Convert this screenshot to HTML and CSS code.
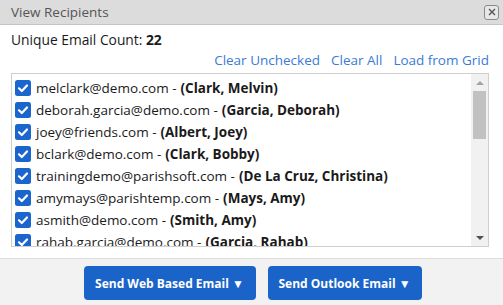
FILE: index.html
```html
<!DOCTYPE html>
<html>
<head>
<meta charset="utf-8">
<link rel="stylesheet" href="styles.css">
</head>
<body>
<div class="dialog">
  <div class="titlebar">
    <span class="title">View Recipients</span>
    <span class="close"><svg width="8" height="8" viewBox="0 0 8 8"><path d="M1 1L7 7M7 1L1 7" stroke="#555" stroke-width="1.4"/></svg></span>
  </div>
  <div class="content">
    <div class="count">Unique Email Count: <b>22</b></div>
    <div class="links">
      <a>Clear Unchecked</a><a>Clear All</a><a>Load from Grid</a>
    </div>
    <div class="listbox">
      <div class="items">
        <div class="row"><span class="cb"><svg width="16" height="16" viewBox="0 0 16 16"><rect width="16" height="16" rx="2.5" fill="#1a66cc"/><path d="M4 8.3L6.8 11L12 5.5" fill="none" stroke="#fff" stroke-width="2.2" stroke-linecap="round" stroke-linejoin="round"/></svg></span>melclark@demo.com - <b>(Clark, Melvin)</b></div>
        <div class="row"><span class="cb"><svg width="16" height="16" viewBox="0 0 16 16"><rect width="16" height="16" rx="2.5" fill="#1a66cc"/><path d="M4 8.3L6.8 11L12 5.5" fill="none" stroke="#fff" stroke-width="2.2" stroke-linecap="round" stroke-linejoin="round"/></svg></span>deborah.garcia@demo.com - <b>(Garcia, Deborah)</b></div>
        <div class="row"><span class="cb"><svg width="16" height="16" viewBox="0 0 16 16"><rect width="16" height="16" rx="2.5" fill="#1a66cc"/><path d="M4 8.3L6.8 11L12 5.5" fill="none" stroke="#fff" stroke-width="2.2" stroke-linecap="round" stroke-linejoin="round"/></svg></span>joey@friends.com - <b>(Albert, Joey)</b></div>
        <div class="row"><span class="cb"><svg width="16" height="16" viewBox="0 0 16 16"><rect width="16" height="16" rx="2.5" fill="#1a66cc"/><path d="M4 8.3L6.8 11L12 5.5" fill="none" stroke="#fff" stroke-width="2.2" stroke-linecap="round" stroke-linejoin="round"/></svg></span>bclark@demo.com - <b>(Clark, Bobby)</b></div>
        <div class="row"><span class="cb"><svg width="16" height="16" viewBox="0 0 16 16"><rect width="16" height="16" rx="2.5" fill="#1a66cc"/><path d="M4 8.3L6.8 11L12 5.5" fill="none" stroke="#fff" stroke-width="2.2" stroke-linecap="round" stroke-linejoin="round"/></svg></span>trainingdemo@parishsoft.com - <b>(De La Cruz, Christina)</b></div>
        <div class="row"><span class="cb"><svg width="16" height="16" viewBox="0 0 16 16"><rect width="16" height="16" rx="2.5" fill="#1a66cc"/><path d="M4 8.3L6.8 11L12 5.5" fill="none" stroke="#fff" stroke-width="2.2" stroke-linecap="round" stroke-linejoin="round"/></svg></span>amymays@parishtemp.com - <b>(Mays, Amy)</b></div>
        <div class="row"><span class="cb"><svg width="16" height="16" viewBox="0 0 16 16"><rect width="16" height="16" rx="2.5" fill="#1a66cc"/><path d="M4 8.3L6.8 11L12 5.5" fill="none" stroke="#fff" stroke-width="2.2" stroke-linecap="round" stroke-linejoin="round"/></svg></span>asmith@demo.com - <b>(Smith, Amy)</b></div>
        <div class="row"><span class="cb"><svg width="16" height="16" viewBox="0 0 16 16"><rect width="16" height="16" rx="2.5" fill="#1a66cc"/><path d="M4 8.3L6.8 11L12 5.5" fill="none" stroke="#fff" stroke-width="2.2" stroke-linecap="round" stroke-linejoin="round"/></svg></span>rahab.garcia@demo.com - <b>(Garcia, Rahab)</b></div>
      </div>
      <div class="scrollbar">
        <div class="arrow up"></div>
        <div class="thumb"></div>
        <div class="track"></div>
        <div class="arrow down"></div>
      </div>
    </div>
  </div>
  <div class="footer">
    <button class="btn">Send Web Based Email ▼</button>
    <button class="btn">Send Outlook Email ▼</button>
  </div>
</div>
</body>
</html>
```
FILE: styles.css
```css
html, body {
  margin: 0;
  padding: 0;
  background: #fff;
}
body {
  font-family: "Open Sans", "Noto Sans", sans-serif;
  color: #1a1a1a;
  font-size: 13px;
}
.dialog {
  width: 503px;
  height: 305px;
  display: flex;
  flex-direction: column;
  overflow: hidden;
}
.titlebar {
  height: 24px;
  flex: none;
  background: #dcdcdc;
  border-bottom: 1px solid #c4c4c4;
  display: flex;
  align-items: center;
  justify-content: space-between;
  padding: 0 4px 0 11px;
}
.title {
  color: #555;
  font-size: 13.5px;
}
.close {
  width: 13px;
  height: 13px;
  border: 1px solid #8a8a8a;
  border-radius: 3px;
  display: flex;
  align-items: center;
  justify-content: center;
  background: #e8e8e8;
}
.content {
  height: 233px;
  flex: none;
  padding: 0 14px 0 11px;
  background: #fff;
  overflow: hidden;
}
.count {
  padding-top: 5px;
  height: 19px;
  line-height: 19px;
  font-size: 13.8px;
}
.count b {
  font-weight: 700;
}
.links {
  display: flex;
  justify-content: flex-end;
  gap: 11px;
  margin-top: 2px;
  height: 19px;
  line-height: 19px;
  font-size: 13.5px;
}
.links a {
  color: #3a7bd5;
}
.listbox {
  margin-top: 3px;
  height: 172px;
  border: 1px solid #cfcfcf;
  display: flex;
  overflow: hidden;
}
.items {
  flex: 1;
  padding: 3px 0 0 3px;
  overflow: hidden;
}
.row {
  height: 22px;
  display: flex;
  align-items: center;
  white-space: nowrap;
  font-size: 13.5px;
}
.row b {
  margin-left: 4px;
}
.cb {
  width: 16px;
  height: 16px;
  margin-right: 5px;
  display: flex;
}
.scrollbar {
  width: 17px;
  background: #f1f1f1;
  display: flex;
  flex-direction: column;
  align-items: center;
}
.arrow {
  height: 17px;
  width: 17px;
  flex: none;
  display: flex;
  align-items: center;
  justify-content: center;
}
.arrow::before {
  content: "";
  border-left: 4px solid transparent;
  border-right: 4px solid transparent;
}
.arrow.up::before {
  border-bottom: 4px solid #a3a3a3;
}
.arrow.down::before {
  border-top: 4px solid #505050;
}
.thumb {
  width: 13px;
  height: 48px;
  flex: none;
  background: #c1c1c1;
}
.track {
  flex: 1;
}
.footer {
  flex: 1;
  background: #f2f2f2;
  border-top: 1px solid #dedede;
  display: flex;
  justify-content: center;
  align-items: flex-start;
  gap: 12px;
  padding-top: 7px;
  padding-left: 2px;
}
.btn {
  height: 34px;
  background: #1a63c9;
  color: #fff;
  border: none;
  border-radius: 4px;
  font-family: inherit;
  font-weight: 700;
  font-size: 12px;
  padding: 0;
  white-space: nowrap;
}
.btn:first-child {
  width: 172px;
}
.btn:last-child {
  width: 154px;
}
```
